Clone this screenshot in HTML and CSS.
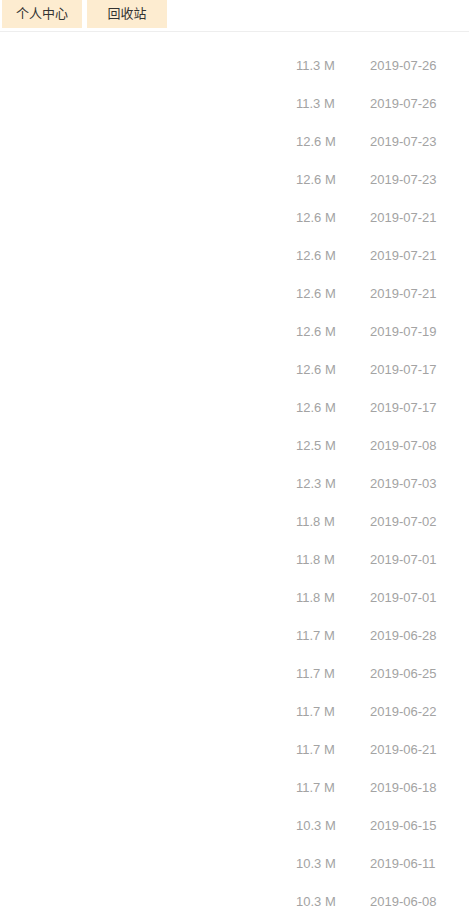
FILE: index.html
```html
<!DOCTYPE html>
<html>
<head>
<meta charset="utf-8">
<link rel="stylesheet" href="styles.css">
</head>
<body>
<div class="tabs">
  <div class="tab">个人中心</div>
  <div class="tab">回收站</div>
</div>
<div class="list">
  <div class="row"><span class="size">11.3 M</span><span class="date">2019-07-26</span></div>
  <div class="row"><span class="size">11.3 M</span><span class="date">2019-07-26</span></div>
  <div class="row"><span class="size">12.6 M</span><span class="date">2019-07-23</span></div>
  <div class="row"><span class="size">12.6 M</span><span class="date">2019-07-23</span></div>
  <div class="row"><span class="size">12.6 M</span><span class="date">2019-07-21</span></div>
  <div class="row"><span class="size">12.6 M</span><span class="date">2019-07-21</span></div>
  <div class="row"><span class="size">12.6 M</span><span class="date">2019-07-21</span></div>
  <div class="row"><span class="size">12.6 M</span><span class="date">2019-07-19</span></div>
  <div class="row"><span class="size">12.6 M</span><span class="date">2019-07-17</span></div>
  <div class="row"><span class="size">12.6 M</span><span class="date">2019-07-17</span></div>
  <div class="row"><span class="size">12.5 M</span><span class="date">2019-07-08</span></div>
  <div class="row"><span class="size">12.3 M</span><span class="date">2019-07-03</span></div>
  <div class="row"><span class="size">11.8 M</span><span class="date">2019-07-02</span></div>
  <div class="row"><span class="size">11.8 M</span><span class="date">2019-07-01</span></div>
  <div class="row"><span class="size">11.8 M</span><span class="date">2019-07-01</span></div>
  <div class="row"><span class="size">11.7 M</span><span class="date">2019-06-28</span></div>
  <div class="row"><span class="size">11.7 M</span><span class="date">2019-06-25</span></div>
  <div class="row"><span class="size">11.7 M</span><span class="date">2019-06-22</span></div>
  <div class="row"><span class="size">11.7 M</span><span class="date">2019-06-21</span></div>
  <div class="row"><span class="size">11.7 M</span><span class="date">2019-06-18</span></div>
  <div class="row"><span class="size">10.3 M</span><span class="date">2019-06-15</span></div>
  <div class="row"><span class="size">10.3 M</span><span class="date">2019-06-11</span></div>
  <div class="row"><span class="size">10.3 M</span><span class="date">2019-06-08</span></div>
</div>
</body>
</html>
```
FILE: styles.css
```css
html, body {
  margin: 0;
  padding: 0;
  background: #fff;
  font-family: "Liberation Sans", Arial, "Noto Sans CJK SC", sans-serif;
  overflow: hidden;
}
.tabs {
  display: flex;
  gap: 5px;
  padding: 0 0 3px 2px;
  border-bottom: 1px solid #eeeeee;
}
.tab {
  width: 80px;
  height: 28px;
  line-height: 28px;
  text-align: center;
  background: #fdecd0;
  color: #333;
  font-size: 13px;
}
.list {
  padding-top: 15px;
}
.row {
  display: flex;
  height: 38px;
  line-height: 38px;
  font-size: 13px;
  color: #a3a3a3;
}
.size {
  margin-left: 296px;
  width: 74px;
}
.date {
  width: 80px;
}
```
